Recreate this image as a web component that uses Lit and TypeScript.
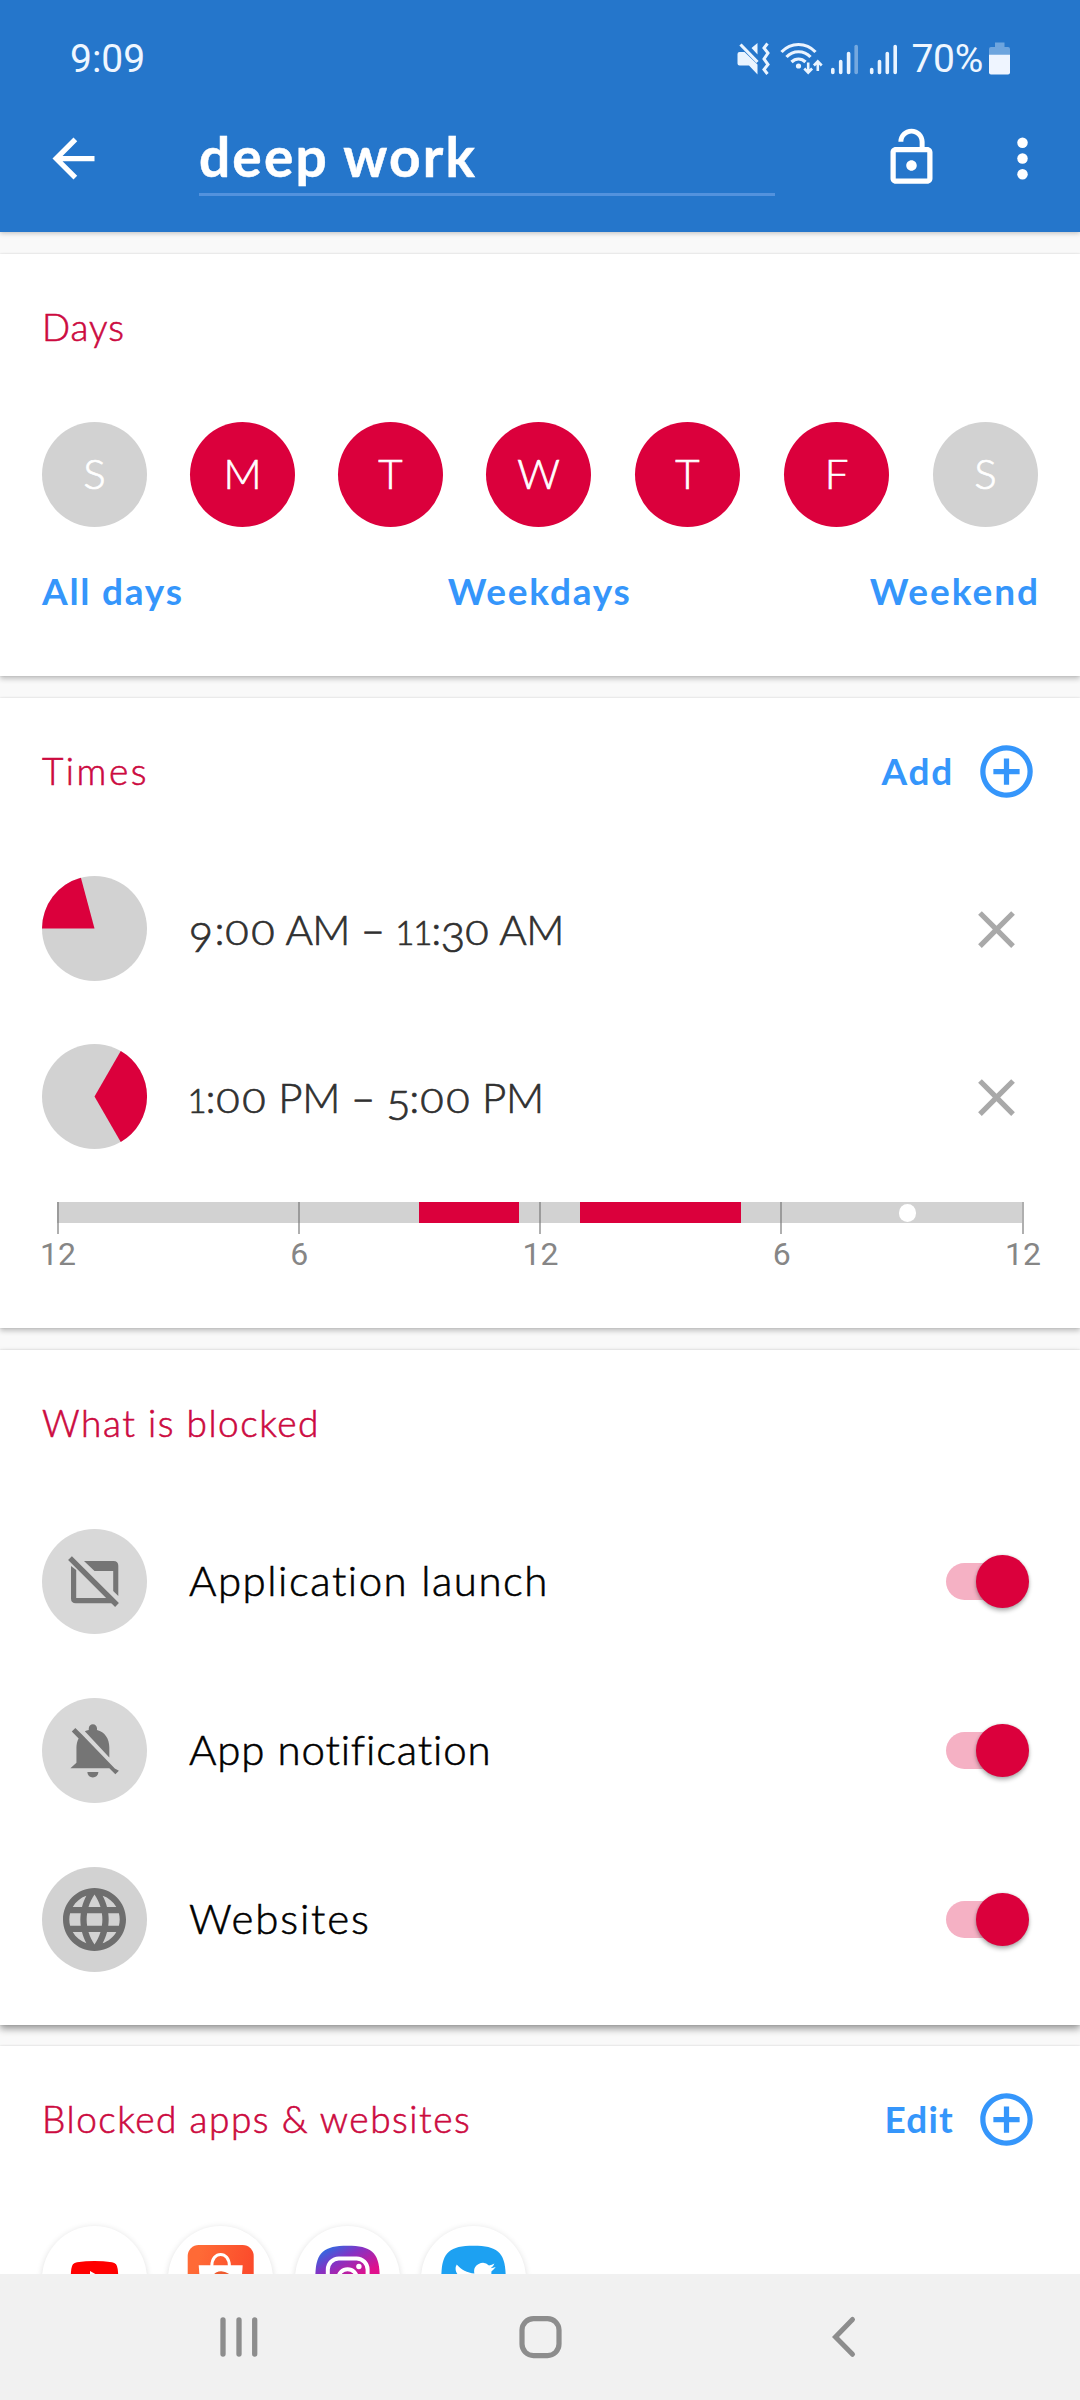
import { LitElement, html, css, svg, nothing, type TemplateResult } from "lit";
import { customElement, property } from "lit/decorators.js";
import { classMap } from "lit/directives/class-map.js";

const RED = "#db003c";
const GREY = "#d2d2d2";

interface TimeRange {
  label: string;
  start: number;
  end: number;
  spacing: string;
}

const DAYS = [
  { letter: "S", on: false },
  { letter: "M", on: true },
  { letter: "T", on: true },
  { letter: "W", on: true },
  { letter: "T", on: true },
  { letter: "F", on: true },
  { letter: "S", on: false },
];

const RANGES: TimeRange[] = [
  { label: "9:00 AM – 11:30 AM", start: 9, end: 11.5, spacing: "t1" },
  { label: "1:00 PM – 5:00 PM", start: 13, end: 17, spacing: "t2" },
];

const NOW = 21.15;

/* Point on the clock dial (105px box, 12-hour face). */
const dial = (hour: number): string => {
  const a = ((hour % 12) / 12) * Math.PI * 2;
  return `${(52.5 + 52.5 * Math.sin(a)).toFixed(2)} ${(52.5 - 52.5 * Math.cos(a)).toFixed(2)}`;
};

@customElement("toggle-switch")
export class ToggleSwitch extends LitElement {
  static styles = css`
    :host { display: block; width: 83px; height: 53px; }
    .track {
      display: flex; align-items: center; justify-content: flex-end;
      width: 76px; height: 37px; margin-top: 8px;
      border-radius: 19px; background: #f5b1c4;
    }
    .thumb {
      flex: none; width: 52.5px; height: 52.5px; margin-right: -6.5px;
      border-radius: 50%; background: #db003c;
      box-shadow: 0 3px 4px rgba(0, 0, 0, 0.28), 0 0 3px rgba(0, 0, 0, 0.15);
    }
  `;
  render() {
    return html`<div class="track"><div class="thumb"></div></div>`;
  }
}

@customElement("clock-pie")
export class ClockPie extends LitElement {
  @property({ type: Number }) start = 0;
  @property({ type: Number }) end = 0;
  static styles = css`:host { display: block; width: 105px; height: 105px; } svg { display: block; }`;
  render() {
    return html`<svg width="105" height="105" viewBox="0 0 105 105">
      <circle cx="52.5" cy="52.5" r="52.5" fill=${GREY}></circle>
      <path fill=${RED} d="M52.5 52.5L${dial(this.start)}A52.5 52.5 0 0 1 ${dial(this.end)}Z"></path>
    </svg>`;
  }
}

@customElement("section-card")
export class SectionCard extends LitElement {
  @property() heading = "";
  @property() tone = "";
  @property() action = "";
  static styles = css`
    :host { display: block; background: #fff; padding: 0 42px; }
    .head { display: flex; align-items: center; height: 144px; }
    h2 {
      margin: 0 auto 0 0; padding-top: 2px; font: 300 37px/44px Lato, sans-serif; color: #cc0a3f;
      -webkit-text-stroke: 0.6px #cc0a3f; letter-spacing: 1.52px;
    }
    h2.days { letter-spacing: 0.9px; }
    h2.times { letter-spacing: 2.5px; }
    .action {
      font: 700 37px/44px Lato, sans-serif; color: #3596fb; letter-spacing: 1.7px;
      margin-right: 21px; padding-top: 2px;
    }
    .action.edit { letter-spacing: 1.2px; }
    svg { display: block; margin-top: 3px; }
  `;
  render() {
    return html`
      <div class="head">
        <h2 class=${this.tone}>${this.heading}</h2>
        ${this.action
          ? html`<span class="action ${this.action.toLowerCase()}">${this.action}</span>
              <svg width="63" height="63" viewBox="0 0 24 24" fill="#3596fb">
                <path d="M13 7h-2v4H7v2h4v4h2v-4h4v-2h-4V7zm-1-5C6.48 2 2 6.48 2 12s4.48 10 10 10 10-4.48 10-10S17.52 2 12 2zm0 18c-4.41 0-8-3.59-8-8s3.59-8 8-8 8 3.59 8 8-3.59 8-8 8z"></path>
              </svg>`
          : nothing}
      </div>
      <slot></slot>
    `;
  }
}

const windowOff = svg`
  <path fill="#757575" d="M42 32H71.5Q76.3 32 76.3 36.8V67L71.2 62V42H52.5Z"></path>
  <path fill="#757575" d="M29 37V69.5Q29 74.3 33.8 74.3H70L65 69H34.2V41Z"></path>
  <path stroke="#757575" stroke-width="5.4" d="M28 29.2L75 76"></path>`;

const bellOff = svg`
  <g transform="translate(18 19.3) scale(2.74)" fill="#757575">
    <path d="M20 18.69L7.84 6.14 5.6 3.9 4.3 5.2l2.5 2.5c-.52.99-.8 2.16-.8 3.28v5.6l-2.2 2.02h14.2l2.2 2.2L21.5 19.5l-1.5-.81zM12 22c1.11 0 2-.89 2-2h-4c0 1.11.89 2 2 2zm6-7.32V11c0-3.08-1.64-5.64-4.5-6.32V4c0-.83-.67-1.5-1.5-1.5s-1.5.67-1.5 1.5v.68c-.5.12-.96.28-1.44.44L18 14.68z"></path>
  </g>`;

const globe = svg`
  <g transform="translate(14.7 14.7) scale(3.15)" fill="#6e6e6e">
    <path d="M11.99 2C6.47 2 2 6.48 2 12s4.47 10 9.99 10C17.52 22 22 17.52 22 12S17.52 2 11.99 2zm6.93 6h-2.95c-.32-1.25-.78-2.45-1.38-3.56 1.84.63 3.37 1.91 4.33 3.56zM12 4.04c.83 1.2 1.48 2.53 1.91 3.96h-3.82c.43-1.43 1.08-2.76 1.91-3.96zM4.26 14C4.1 13.36 4 12.69 4 12s.1-1.36.26-2h3.38c-.08.66-.14 1.32-.14 2 0 .68.06 1.34.14 2H4.26zm.82 2h2.95c.32 1.25.78 2.45 1.38 3.56-1.84-.63-3.37-1.9-4.33-3.56zm2.95-8H5.08c.96-1.66 2.49-2.93 4.33-3.56C8.81 5.55 8.35 6.75 8.03 8zM12 19.96c-.83-1.2-1.48-2.53-1.91-3.96h3.82c-.43 1.43-1.08 2.76-1.91 3.96zM14.34 14H9.66c-.09-.66-.16-1.32-.16-2 0-.68.07-1.35.16-2h4.68c.09.65.16 1.32.16 2 0 .68-.07 1.34-.16 2zm.25 5.56c.6-1.11 1.06-2.31 1.38-3.56h2.95c-.96 1.65-2.49 2.93-4.33 3.56zM16.36 14c.08-.66.14-1.32.14-2 0-.68-.06-1.34-.14-2h3.38c.16.64.26 1.31.26 2s-.1 1.36-.26 2h-3.38z"></path>
  </g>`;

const BLOCKED: { label: string; cls: string; bg: string; icon: TemplateResult<2> }[] = [
  { label: "Application launch", cls: "b1", bg: "#d8d8d8", icon: windowOff },
  { label: "App notification", cls: "b2", bg: "#d8d8d8", icon: bellOff },
  { label: "Websites", cls: "b3", bg: "#d2d2d2", icon: globe },
];

const squircle = "M52.5 19.7C77.5 19.7 84.7 27 84.7 52S77.5 84.3 52.5 84.3 20.3 77 20.3 52 27.5 19.7 52.5 19.7Z";

const APPS: TemplateResult<2>[] = [
  svg`
    <path fill="#f00" d="M35 36.2Q52.5 33.8 70 36.2Q75.2 37 75.7 43Q76.8 52 75.7 61Q75.2 67 70 67.8Q52.5 70 35 67.8Q29.8 67 29.3 61Q28.2 52 29.3 43Q29.8 37 35 36.2Z"></path>
    <path fill="#fff" d="M48 45L60.5 52L48 59Z"></path>`,
  svg`
    <defs><linearGradient id="shop" x1="0" y1="0" x2="1" y2="0.3">
      <stop offset="0.2" stop-color="#ff6a36"></stop><stop offset="1" stop-color="#fb4a2b"></stop>
    </linearGradient></defs>
    <rect x="19.7" y="19" width="66" height="66" rx="11" fill="url(#shop)"></rect>
    <path fill="none" stroke="#fff" stroke-width="3" d="M43.8 40C43.8 24.5 61.4 24.5 61.4 40"></path>
    <path fill="#fff" d="M30.7 39.3H74.7L72 76H33.5Z"></path>
    <path fill="none" stroke="#ee5a2e" stroke-width="3" d="M60 49C54 45 46.5 46.5 46.5 52S60 56 60 63 50 70 45 65"></path>`,
  svg`
    <defs><linearGradient id="insta" x1="0.15" y1="0" x2="0.5" y2="0.6">
      <stop offset="0" stop-color="#2273e6"></stop><stop offset="0.45" stop-color="#8433c4"></stop>
      <stop offset="1" stop-color="#e0108c"></stop>
    </linearGradient></defs>
    <path fill="url(#insta)" d=${squircle}></path>
    <rect x="32.8" y="32.5" width="39.8" height="39.8" rx="11" fill="none" stroke="#fff" stroke-width="4"></rect>
    <circle cx="52.6" cy="52.5" r="9.3" fill="none" stroke="#fff" stroke-width="4"></circle>
    <circle cx="63.9" cy="40.5" r="2.7" fill="#fff"></circle>`,
  svg`
    <path fill="#1da1f2" d=${squircle}></path>
    <path fill="#fff" transform="translate(32.9 33) scale(1.74)" d="M23.953 4.57a10 10 0 01-2.825.775 4.958 4.958 0 002.163-2.723c-.951.555-2.005.959-3.127 1.184a4.92 4.92 0 00-8.384 4.482C7.69 8.095 4.067 6.13 1.64 3.162a4.822 4.822 0 00-.666 2.475c0 1.71.87 3.213 2.188 4.096a4.904 4.904 0 01-2.228-.616v.06a4.923 4.923 0 003.946 4.827 4.996 4.996 0 01-2.212.085 4.936 4.936 0 004.604 3.417 9.867 9.867 0 01-6.102 2.105c-.39 0-.779-.023-1.17-.067a13.995 13.995 0 007.557 2.209c9.053 0 13.998-7.496 13.998-13.985 0-.21 0-.42-.015-.63A9.935 9.935 0 0024 4.59z"></path>`,
];

@customElement("app-root")
export class AppRoot extends LitElement {
  static styles = css`
    :host { display: block; }
    svg { display: block; flex: none; }
    .screen {
      display: grid; grid-template-rows: 232px 1fr 126px;
      width: 1080px; height: 2400px; overflow: hidden;
      background: #f9f9f9; font-family: Lato, sans-serif;
    }

    header { background: #2576cb; color: #fff; box-shadow: 0 1px 5px rgba(0, 0, 0, 0.25); z-index: 1; }
    .status {
      display: flex; align-items: center; height: 117px; padding: 0 70px;
      font: 400 39px/46px Roboto, sans-serif; color: #eff6ff;
    }
    .clock { margin-right: auto; }
    .pct { letter-spacing: -0.3px; margin: 0 6px 0 0; }
    .bar { display: flex; align-items: flex-start; padding-left: 42px; }
    .back { margin-top: 10px; }
    .title {
      width: 576px; height: 74px; margin-left: 94px; padding-top: 2px;
      border-bottom: 3px solid #5392dd; font: 700 55px/74px Lato, sans-serif;
      letter-spacing: 2.15px; -webkit-text-stroke: 0.5px #fff;
    }
    .lock { margin: 9px 0 0 105px; }
    .more { margin: 10px 0 0 48px; }

    main { overflow: hidden; min-height: 0; padding-top: 22px; display: flex; flex-direction: column; gap: 22px; }
    section-card { flex: none; box-sizing: border-box; box-shadow: 0 3px 5px rgba(0, 0, 0, 0.22), 0 0 2px rgba(0, 0, 0, 0.13); }
    .card-days { height: 422px; }
    .card-times { height: 630px; }
    .card-blocked { height: 675px; box-shadow: 0 4px 7px rgba(0, 0, 0, 0.38), 0 0 2px rgba(0, 0, 0, 0.13); }
    .card-apps { height: 400px; margin-top: -1px; }

    .days { display: flex; gap: 43px; padding-top: 24px; }
    .day {
      width: 105px; height: 105px; border-radius: 50%; background: #d2d2d2; color: #fff;
      font: 300 42px/102px Lato, sans-serif; text-align: center; -webkit-text-stroke: 0.7px #fff;
    }
    .day:nth-child(n + 5) { margin-left: 1px; }
    .day.on { background: #db003c; }
    .presets {
      display: flex; justify-content: space-between; margin-top: 41px;
      font: 700 37px/46px Lato, sans-serif; color: #3596fb; letter-spacing: 1.75px;
    }
    .presets span:last-child { margin-right: -2px; letter-spacing: 1.95px; }
    .presets span:nth-child(2) { margin-left: 26px; }

    .ranges { display: flex; flex-direction: column; gap: 63px; padding-top: 34px; }
    .range { display: flex; align-items: center; }
    .range .label {
      margin: 0 auto 0 40.5px; font: 300 42px/50px Lato, sans-serif; color: #303030;
      -webkit-text-stroke: 0.7px #303030; white-space: pre; height: 50px;
    }
    .t1 { letter-spacing: -0.6px; }
    .t2 { letter-spacing: -0.35px; }
    .dg { display: inline-block; text-align: center; line-height: 44px; letter-spacing: 0; transform-origin: 50% 80%; }
    .d0 { width: 26px; font-size: 33px; transform: scaleX(1.22); }
    .d1 { width: 18px; font-size: 33px; }
    .d3, .d5 { width: 23px; vertical-align: -7px; }
    .d9 { width: 27px; vertical-align: -7px; }
    .close { margin-right: 10px; margin-top: 2px; }

    .timeline { position: relative; width: 965px; height: 21px; margin: 53px 0 0 15px; background: #d2d2d2; }
    .busy { position: absolute; top: 0; height: 21px; background: #db003c; }
    .tick { position: absolute; top: 0; width: 2px; height: 31.5px; margin-left: -0.5px; background: rgba(110, 110, 110, 0.55); }
    .now { position: absolute; top: 2px; width: 17.5px; height: 17.5px; margin-left: -8.5px; border-radius: 50%; background: #fff; }
    .hour {
      position: absolute; top: 33px; width: 60px; margin-left: -29px; text-align: center;
      font: 400 32px/38px Roboto, sans-serif; color: #868686;
    }

    .rows { display: flex; flex-direction: column; gap: 64px; padding-top: 35px; }
    .row { display: flex; align-items: center; }
    .row .name {
      margin: 0 auto 4px 42px; font: 300 42px/50px Lato, sans-serif; color: #000;
      -webkit-text-stroke: 0.6px #000;
    }
    .row .b1 { letter-spacing: 1.52px; }
    .row .b2 { letter-spacing: 0.85px; }
    .row .b3 { letter-spacing: 1.85px; }
    toggle-switch { margin-right: 9px; }

    .apps { display: flex; gap: 21.3px; padding-top: 36px; }
    .app { width: 105px; height: 105px; border-radius: 50%; background: #fff; box-shadow: 0 1px 6px rgba(0, 0, 0, 0.13); }

    nav {
      display: flex; align-items: center; justify-content: space-between;
      padding: 0 216px; background: #f1f1f1; z-index: 1;
    }
  `;

  private status() {
    return html`<div class="status">
      <span class="clock">9:09</span>
      <svg width="175" height="36" viewBox="736 39 175 36" fill="#eaf4ff">
        <path d="M739.5 50h5l13 12.5V72.5L749 63.5h-9.5a2 2 0 0 1-2-2V52a2 2 0 0 1 2-2zM757.5 41v11.5L751.5 46z"></path>
        <path d="M740.5 42.5L757.5 60" stroke="#eaf4ff" stroke-width="3.2" fill="none"></path>
        <path d="M767.5 41.5L764 46l4 5-4 6 4 5.5-4 5 3.5 4.5" stroke="#eaf4ff" stroke-width="3" fill="none"></path>
        <g fill="none" stroke="#eaf4ff" stroke-width="3.2">
          <path d="M781.5 50C791 40 806 40 815.5 50"></path>
          <path d="M786.5 55C793 48 804 48 810.5 55"></path>
          <path d="M791.5 60C795.5 56 801.5 56 805.5 60"></path>
        </g>
        <circle cx="798.5" cy="64" r="2.6"></circle>
        <g fill="none" stroke="#eaf4ff" stroke-width="2.6">
          <path d="M808.2 60.5V70.5M804.3 66.5L808.2 70.7L812.1 66.5"></path>
          <path d="M817.8 69V59.5M813.9 63.5L817.8 59.3L821.7 63.5"></path>
        </g>
        <g stroke="#eaf4ff" stroke-width="3.6" stroke-linecap="round">
          <path d="M832.8 67.5V70.5M840.7 59.5V70.5M848.6 51.5V70.5"></path>
          <path opacity="0.4" d="M856.2 44.5V70.5"></path>
          <path d="M871.7 67.5V70.5M879.5 59.5V70.5M887.3 51.5V70.5M895.2 44.5V70.5"></path>
        </g>
      </svg>
      <span class="pct">70%</span>
      <svg class="battery" width="21" height="33" viewBox="0 0 21 33">
        <path fill="#6ea5de" d="M6 0.5h9.5v4.5H19a2 2 0 0 1 2 2v6H0V7a2 2 0 0 1 2-2h4z"></path>
        <path fill="#eff5ff" d="M0 12.7h21V30.5a2 2 0 0 1-2 2H2a2 2 0 0 1-2-2z"></path>
      </svg>
    </div>`;
  }

  private digits(label: string) {
    return [...label].map((c) => (/\d/.test(c) ? html`<span class="dg d${c}">${c}</span>` : c));
  }

  render() {
    return html`<div class="screen">
      <header>
        ${this.status()}
        <div class="bar">
          <svg class="back" width="63" height="63" viewBox="0 0 24 24" fill="#fff">
            <path d="M20 11H7.83l5.59-5.59L12 4l-8 8 8 8 1.41-1.41L7.83 13H20v-2z"></path>
          </svg>
          <div class="title">deep work</div>
          <svg class="lock" width="63" height="63" viewBox="0 0 24 24" fill="#fff">
            <path d="M12 17c1.1 0 2-.9 2-2s-.9-2-2-2-2 .9-2 2 .9 2 2 2zm6-9h-1V6c0-2.76-2.24-5-5-5S7 3.24 7 6h1.9c0-1.71 1.39-3.1 3.1-3.1 1.71 0 3.1 1.39 3.1 3.1v2H6c-1.1 0-2 .9-2 2v10c0 1.1.9 2 2 2h12c1.1 0 2-.9 2-2V10c0-1.1-.9-2-2-2zm0 12H6V10h12v10z"></path>
          </svg>
          <svg class="more" width="63" height="63" viewBox="0 0 24 24" fill="#fff">
            <circle cx="12" cy="6" r="2"></circle><circle cx="12" cy="12" r="2"></circle><circle cx="12" cy="18" r="2"></circle>
          </svg>
        </div>
      </header>

      <main>
        <section-card class="card-days" heading="Days" tone="days">
          <div class="days">
            ${DAYS.map((d) => html`<div class=${classMap({ day: true, on: d.on })}>${d.letter}</div>`)}
          </div>
          <div class="presets"><span>All days</span><span>Weekdays</span><span>Weekend</span></div>
        </section-card>

        <section-card class="card-times" heading="Times" tone="times" action="Add">
          <div class="ranges">
            ${RANGES.map(
              (r) => html`<div class="range">
                <clock-pie .start=${r.start} .end=${r.end}></clock-pie>
                <div class="label ${r.spacing}">${this.digits(r.label)}</div>
                <svg class="close" width="63" height="63" viewBox="0 0 24 24" fill="#a9a9a9">
                  <path d="M19 6.41L17.59 5 12 10.59 6.41 5 5 6.41 10.59 12 5 17.59 6.41 19 12 13.41 17.59 19 19 17.59 13.41 12z"></path>
                </svg>
              </div>`
            )}
          </div>
          <div class="timeline">
            ${RANGES.map(
              (r) => html`<div class="busy" style="left:${(r.start / 24) * 100}%;width:${((r.end - r.start) / 24) * 100}%"></div>`
            )}
            ${[0, 6, 12, 18, 24].map(
              (h) => html`<div class="tick" style="left:${(h / 24) * 100}%"></div>
                <div class="hour" style="left:${(h / 24) * 100}%">${h % 12 || 12}</div>`
            )}
            <div class="now" style="left:${(NOW / 24) * 100}%"></div>
          </div>
        </section-card>

        <section-card class="card-blocked" heading="What is blocked" tone="what">
          <div class="rows">
            ${BLOCKED.map(
              (b) => html`<div class="row">
                <svg width="105" height="105" viewBox="0 0 105 105">
                  <circle cx="52.5" cy="52.5" r="52.5" fill=${b.bg}></circle>${b.icon}
                </svg>
                <span class="name ${b.cls}">${b.label}</span>
                <toggle-switch></toggle-switch>
              </div>`
            )}
          </div>
        </section-card>

        <section-card class="card-apps" heading="Blocked apps &amp; websites" tone="apps" action="Edit">
          <div class="apps">
            ${APPS.map((a) => html`<div class="app"><svg width="105" height="105" viewBox="0 0 105 105">${a}</svg></div>`)}
          </div>
        </section-card>
      </main>

      <nav>
        <svg width="44" height="44" viewBox="216 2315 44 44" stroke="#8d8d8d" stroke-width="5.3" stroke-linecap="round">
          <path d="M223 2320V2354M239 2320V2354M254.7 2320V2354"></path>
        </svg>
        <svg width="44" height="44" viewBox="0 0 44 44">
          <rect x="4" y="3.6" width="37" height="37" rx="11.5" fill="none" stroke="#8d8d8d" stroke-width="5.2"></rect>
        </svg>
        <svg width="44" height="44" viewBox="820 2315 44 44" fill="none" stroke="#8d8d8d" stroke-width="5" stroke-linecap="round">
          <path d="M852.5 2319.5L835.5 2337L852.5 2354.3"></path>
        </svg>
      </nav>
    </div>`;
  }
}
